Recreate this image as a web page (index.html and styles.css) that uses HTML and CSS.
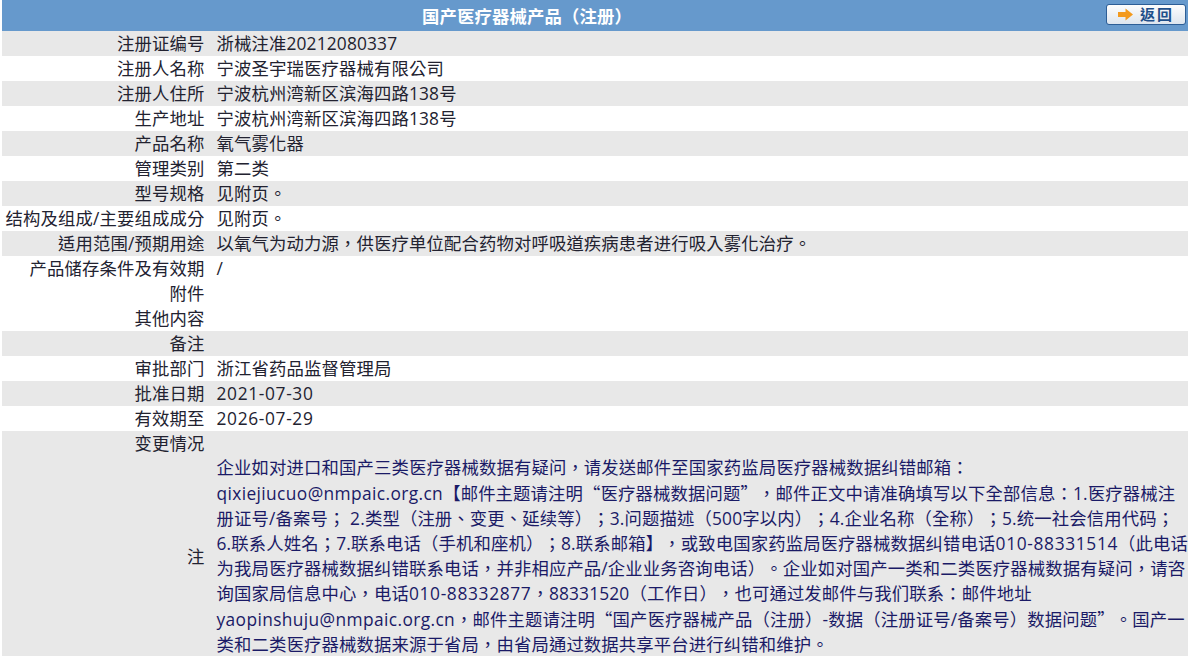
FILE: index.html
```html
<!DOCTYPE html>
<html lang="zh-TW">
<head>
<meta charset="utf-8">
<title>国产医疗器械产品（注册）</title>
<link rel="stylesheet" href="styles.css">
</head>
<body>
<div class="page">
  <div class="head">
    <span class="head-title">国产医疗器械产品（注册）</span>
    <a class="back" href="#">
      <svg class="back-icon" width="15" height="13" viewBox="0 0 15 13"><path d="M0 4h7.500V0.500L15 6.500 7.500 12.500V9H0z" fill="#f39a1e"/></svg>
      <span class="back-text">返回</span>
    </a>
  </div>
  <div class="row alt"><div class="k">注册证编号</div><div class="v">浙械注准20212080337</div></div>
  <div class="row"><div class="k">注册人名称</div><div class="v">宁波圣宇瑞医疗器械有限公司</div></div>
  <div class="row alt"><div class="k">注册人住所</div><div class="v">宁波杭州湾新区滨海四路138号</div></div>
  <div class="row"><div class="k">生产地址</div><div class="v">宁波杭州湾新区滨海四路138号</div></div>
  <div class="row alt"><div class="k">产品名称</div><div class="v">氧气雾化器</div></div>
  <div class="row"><div class="k">管理类别</div><div class="v">第二类</div></div>
  <div class="row alt"><div class="k">型号规格</div><div class="v">见附页。</div></div>
  <div class="row"><div class="k">结构及组成/主要组成成分</div><div class="v">见附页。</div></div>
  <div class="row alt"><div class="k">适用范围/预期用途</div><div class="v">以氧气为动力源，供医疗单位配合药物对呼吸道疾病患者进行吸入雾化治疗。</div></div>
  <div class="row"><div class="k">产品储存条件及有效期</div><div class="v">/</div></div>
  <div class="row"><div class="k">附件</div><div class="v"></div></div>
  <div class="row"><div class="k">其他内容</div><div class="v"></div></div>
  <div class="row alt"><div class="k">备注</div><div class="v"></div></div>
  <div class="row"><div class="k">审批部门</div><div class="v">浙江省药品监督管理局</div></div>
  <div class="row alt"><div class="k">批准日期</div><div class="v"><span class="num">2021-07-30</span></div></div>
  <div class="row"><div class="k">有效期至</div><div class="v"><span class="num">2026-07-29</span></div></div>
  <div class="row alt"><div class="k">变更情况</div><div class="v"></div></div>
  <div class="row alt note"><div class="k">注</div><div class="v">企业如对进口和国产三类医疗器械数据有疑问，请发送邮件至国家药监局医疗器械数据纠错邮箱：<span class="mail">qixiejiucuo@nmpaic.org.cn</span>【邮件主题请注明<span class="q">“</span>医疗器械数据问题<span class="q">”</span>，邮件正文中请准确填写以下全部信息：1.医疗器械注册证号/备案号； 2.类型（注册、变更、延续等）；3.问题描述（500字以内）；4.企业名称（全称）；5.统一社会信用代码；6.联系人姓名；7.联系电话（手机和座机）；8.联系邮箱】，或致电国家药监局医疗器械数据纠错电话<span class="num">010-88331514</span>（此电话为我局医疗器械数据纠错联系电话，并非相应产品/企业业务咨询电话）。企业如对国产一类和二类医疗器械数据有疑问，请咨询国家局信息中心，电话<span class="num">010-88332877</span>，88331520（工作日），也可通过发邮件与我们联系：邮件地址<span class="mail">yaopinshuju@nmpaic.org.cn</span>，邮件主题请注明<span class="q">“</span>国产医疗器械产品（注册）-数据（注册证号/备案号）数据问题<span class="q">”</span>。国产一类和二类医疗器械数据来源于省局，由省局通过数据共享平台进行纠错和维护。</div></div>
</div>
</body>
</html>
```
FILE: styles.css
```css
html, body { margin: 0; padding: 0; background: #fff; overflow: hidden; }
body { font-family: "Open Sans", "Noto Sans CJK TC", sans-serif; font-size: 17.35px; letter-spacing: 0.15px; color: #222230; text-spacing-trim: space-all; }
.page { margin-left: 2px; width: 1186px; }
.head { height: 31px; box-sizing: border-box; padding-right: 136px; background: #6699cc; display: flex; align-items: center; justify-content: center; position: relative; }
.head-title { color: #fff; font-weight: 700; }
.back { position: absolute; right: 2px; top: 4px; width: 80px; height: 21px; box-sizing: border-box; border: 1px solid #2d5e96; border-radius: 3px; background: linear-gradient(#fdfdfd, #dde5ee); display: flex; align-items: center; justify-content: center; gap: 7px; text-decoration: none; }
.back-text { font-size: 15px; font-weight: 700; color: #1f4f8a; line-height: 1; letter-spacing: 2px; }
.row { display: flex; height: 25px; line-height: 24px; }
.alt { background: #e8e8e8; }
.k { width: 202.5px; flex: none; text-align: right; white-space: nowrap; }
.v { margin-left: 12px; flex: 1; white-space: nowrap; }
.note { height: 200px; align-items: center; }
.note .v { white-space: normal; color: #1a1a66; line-height: 25px; }
.q { font-family: "Noto Sans CJK TC", sans-serif; }
.mail { letter-spacing: 0.38px; }
.num { letter-spacing: 0.65px; }
```
